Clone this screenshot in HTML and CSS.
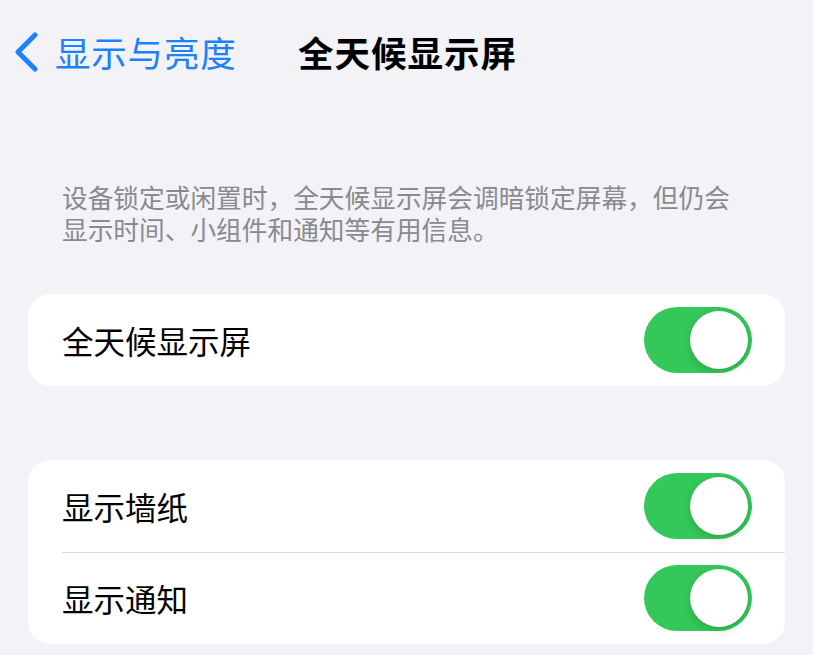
FILE: index.html
```html
<!DOCTYPE html>
<html lang="zh-CN">
<head>
<meta charset="utf-8">
<link rel="stylesheet" href="styles.css">
</head>
<body>
<div class="page">
  <header class="nav">
    <div class="back">
      <svg class="chevron" width="26" height="40" viewBox="0 0 26 40"><path d="M22 3 L5 20 L22 37" fill="none" stroke="#1a82fb" stroke-width="5" stroke-linecap="round" stroke-linejoin="round"/></svg>
      <span class="back-label">显示与亮度</span>
    </div>
    <h1 class="title">全天候显示屏</h1>
  </header>
  <p class="desc">设备锁定或闲置时，全天候显示屏会调暗锁定屏幕，但仍会显示时间、小组件和通知等有用信息。</p>
  <section class="card card-first">
    <div class="row">
      <span class="label">全天候显示屏</span>
      <span class="toggle"><span class="knob"></span></span>
    </div>
  </section>
  <section class="card card-second">
    <div class="row">
      <span class="label">显示墙纸</span>
      <span class="toggle"><span class="knob"></span></span>
    </div>
    <div class="row row-sep">
      <span class="label">显示通知</span>
      <span class="toggle"><span class="knob"></span></span>
    </div>
  </section>
</div>
</body>
</html>
```
FILE: styles.css
```css
html, body {
  margin: 0;
  padding: 0;
  background: #f2f2f7;
}
body {
  font-family: "Noto Sans CJK SC", "Noto Sans", sans-serif;
  width: 813px;
  height: 655px;
  overflow: hidden;
}
.page {
  display: flex;
  flex-direction: column;
}
.nav {
  display: flex;
  align-items: center;
  height: 104px;
  padding-left: 13px;
  box-sizing: border-box;
}
.back {
  display: flex;
  align-items: center;
  gap: 16px;
  width: 285px;
}
.chevron {
  display: block;
}
.back-label {
  color: #1a82fb;
  font-size: 35.5px;
  line-height: 40px;
  letter-spacing: 0.8px;
}
.title {
  margin: 0;
  font-size: 35.5px;
  line-height: 40px;
  font-weight: 700;
  color: #000;
  letter-spacing: 1px;
}
.desc {
  margin: 77px 0 0 0;
  padding: 0 70px 0 62px;
  font-size: 25.7px;
  line-height: 32px;
  color: #8a8a8e;
  height: 64px;
}
.card {
  margin: 0 28px;
  background: #fff;
  border-radius: 22px;
  overflow: hidden;
}
.card-first {
  margin-top: 49px;
}
.card-second {
  margin-top: 74px;
}
.row {
  display: flex;
  align-items: center;
  justify-content: space-between;
  height: 92px;
  padding: 0 33px 0 34px;
  box-sizing: border-box;
  position: relative;
}
.row-sep::before {
  content: "";
  position: absolute;
  left: 34px;
  right: 0;
  top: 0;
  height: 1px;
  background: #dcdce0;
}
.label {
  font-size: 31.5px;
  line-height: 40px;
  color: #000;
}
.toggle {
  width: 108px;
  height: 66px;
  border-radius: 33px;
  background: #34c759;
  display: flex;
  align-items: center;
  justify-content: flex-end;
  padding: 0 4px;
  box-sizing: border-box;
}
.knob {
  width: 58px;
  height: 58px;
  border-radius: 50%;
  background: #fff;
  box-shadow: 0 3px 8px rgba(0,0,0,0.15), 0 1px 1px rgba(0,0,0,0.06);
}
```
